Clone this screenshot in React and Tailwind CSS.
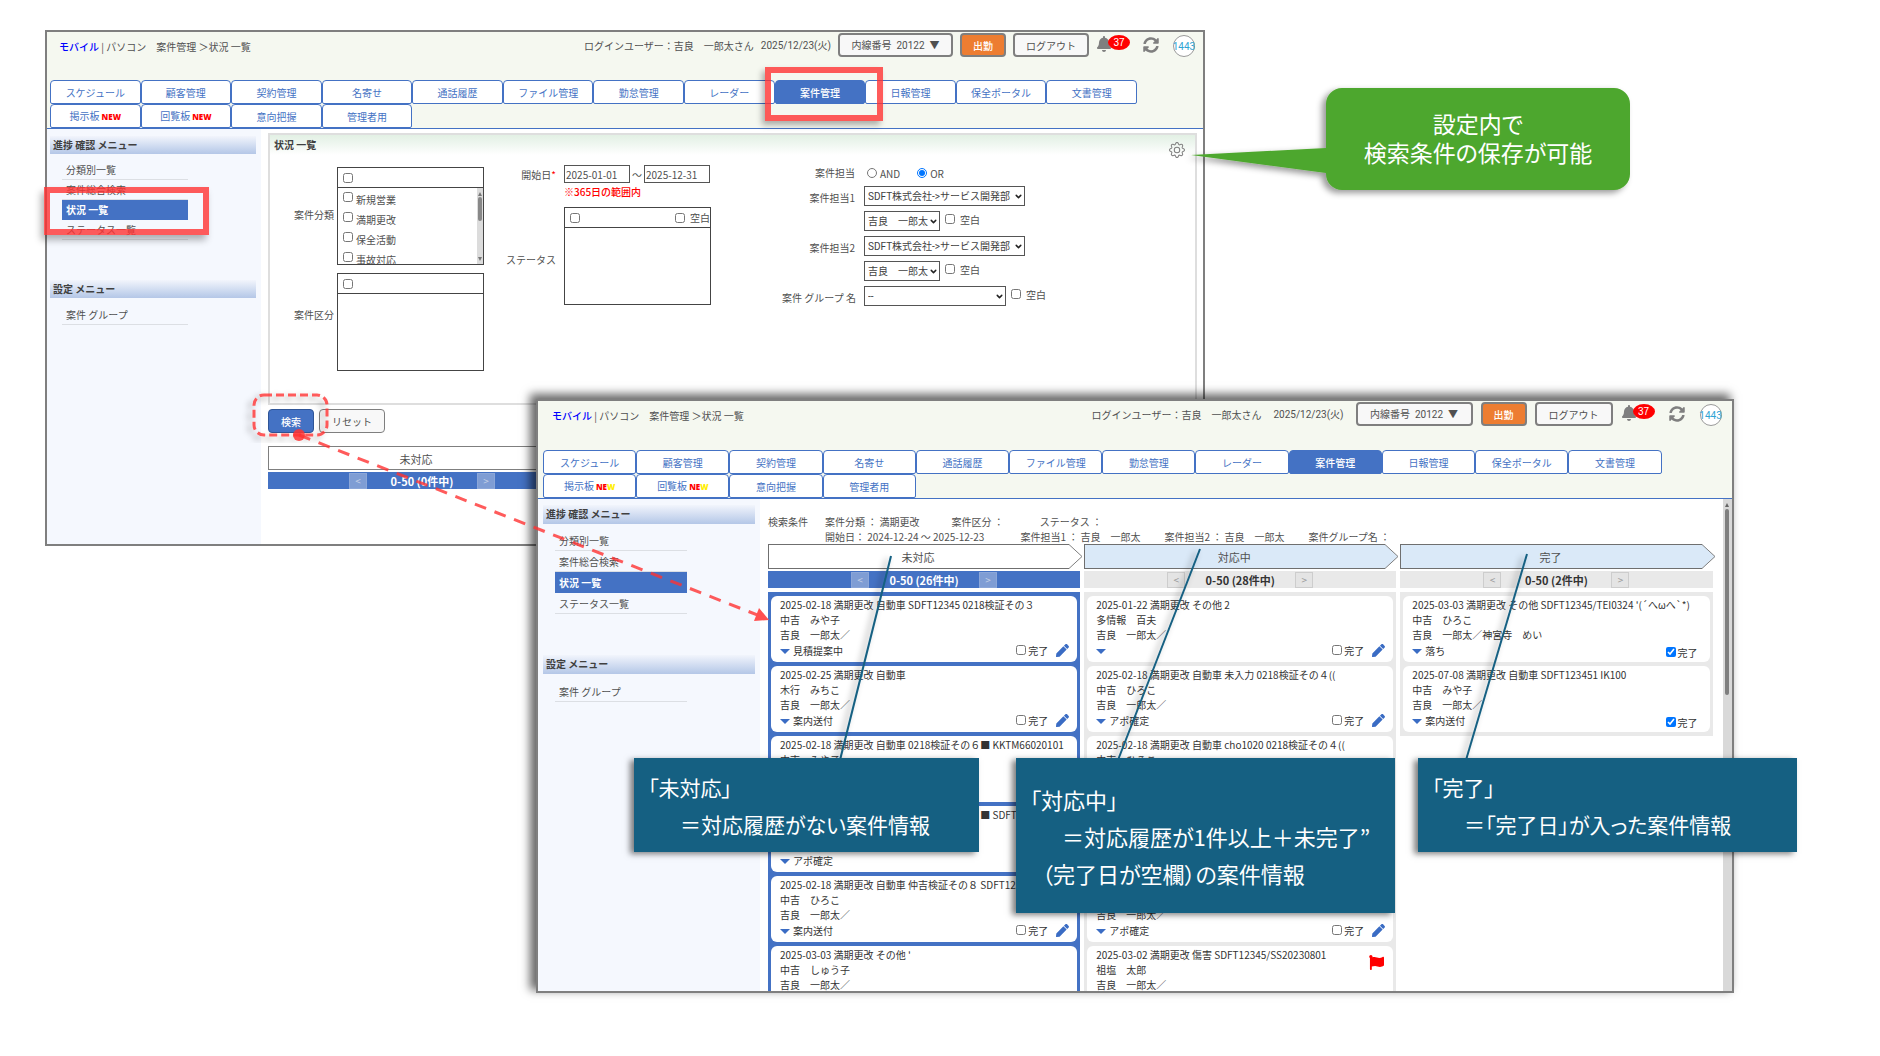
import React from 'react';
import { FaBell, FaPen, FaFlag, FaSyncAlt } from 'react-icons/fa';
import { BsGear } from 'react-icons/bs';
import { ChevronDown } from 'lucide-react';

const TABS = [
  'スケジュール', '顧客管理', '契約管理', '名寄せ', '通話履歴', 'ファイル管理', '勤怠管理', 'レーダー',
  '案件管理', '日報管理', '保全ポータル', '文書管理', '掲示板', '回覧板', '意向把握', '管理者用',
];

const HAS_NEW = ['掲示板', '回覧板'];

function TopBar({ large }) {
  return (
    <header className={'flex items-start bg-[#f5f8f0] ' + (large ? 'h-[49px] pr-[10px] pl-[14px]' : 'h-12 pr-2 pl-3')}>
      <nav className="flex h-7 items-center whitespace-pre">
        <a href="#mobile" className="font-medium text-[#0000ff]">モバイル</a>
        <span> | パソコン　案件管理 ＞状況 一覧</span>
      </nav>
      <div className={'ml-auto flex items-start pt-px ' + (large ? 'gap-[8px]' : 'gap-[7px]')}>
        <span className="leading-[26px] whitespace-pre">ログインユーザー：吉良　一郎太さん</span>
        <span className={"font-['Roboto','Noto_Sans_CJK_JP',sans-serif] leading-[26px] " + (large ? 'mx-1' : '')}>2025/12/23(火)</span>
        <button className={"h-6 rounded border-2 border-[#7f7f7f] bg-[#f8f8f8] font-['Roboto','Noto_Sans_CJK_JP',sans-serif] whitespace-pre " + (large ? 'w-[117px]' : 'w-[115px]')}>
          {'内線番号  20122  ▼'}
        </button>
        <button className="h-6 w-[46px] rounded border-2 border-[#7f7f7f] bg-[#ed7d31] font-medium text-white">出勤</button>
        <button className={'h-6 rounded border-2 border-[#7f7f7f] bg-[#f8f8f8] ' + (large ? 'w-[78px]' : 'w-[76px]')}>ログアウト</button>
        <div className="relative h-6 w-[34px]">
          <FaBell className="mt-[3px] size-[16px] text-[#7f7f7f]" />
          <span className="absolute top-[2px] left-[12px] flex h-[15px] w-[22px] items-center justify-center rounded-[50%] bg-[#ff0000] font-['Liberation_Sans',sans-serif] text-[10px] leading-none text-white">
            37
          </span>
        </div>
        <button aria-label="更新" className="ml-[6px] h-6">
          <FaSyncAlt className="size-[16px] text-[#7f7f7f]" />
        </button>
        <span className="mt-[2px] ml-[7px] flex size-[22px] items-center justify-center rounded-full border border-[#9a9a9a] bg-white font-['Roboto',sans-serif] text-[10px] text-[#2fa4d4]">
          1443
        </span>
      </div>
    </header>
  );
}

function NewMark({ twoTone }) {
  return (
    <b className="ml-[2px] font-['Open_Sans',sans-serif] text-[8px] font-extrabold text-[#ff0000]">
      {twoTone ? <>NE<span className="text-[#ffee00]">W</span></> : 'NEW'}
    </b>
  );
}

function TabBar({ twoTone }) {
  return (
    <nav className={'grid grid-cols-12 border-b border-[#4472c4] bg-[#f5f8f0] ' + (twoTone ? 'pr-[70px] pl-[5px]' : 'pr-[66px] pl-[3px]')}>
      {TABS.map((t) => (
        <button
          key={t}
          className={
            'h-6 rounded-t rounded-b-xs border border-[#4472c4] whitespace-nowrap ' +
            (t === '案件管理' ? 'bg-[#4472c4] font-medium text-white' : 'bg-white text-[#4472c4]')
          }
        >
          {t}
          {HAS_NEW.includes(t) && <NewMark twoTone={twoTone} />}
        </button>
      ))}
    </nav>
  );
}

function MenuHead({ children, large }) {
  return (
    <h2 className={'bg-linear-to-b from-[#f2f5fc] to-[#b4c7e7] pl-[3px] leading-[17px] font-bold text-[#404040] ' + (large ? 'h-[19px]' : 'h-[18px]')}>
      {children}
    </h2>
  );
}

function MenuItem({ children, active, large }) {
  return (
    <a
      href="#menu"
      className={
        'mr-[68px] ml-3 block border-b pl-1 ' +
        (large ? 'h-[21px] leading-[21px] ' : 'h-5 leading-[20px] ') +
        (active ? 'border-[#4472c4] bg-[#4472c4] font-bold text-white' : 'border-[#dcdfe4]')
      }
    >
      {children}
    </a>
  );
}

function SideMenu({ large }) {
  return (
    <aside className={'shrink-0 bg-[#f5f8fe] pr-[5px] ' + (large ? 'w-[222px] pt-[6px] pl-[5px]' : 'w-[214px] pt-[7px] pl-[3px]')}>
      <MenuHead large={large}>進捗 確認 メニュー</MenuHead>
      <div className={large ? 'mt-[6px] mb-[41px]' : 'mt-[6px] mb-10'}>
        <MenuItem large={large}>分類別一覧</MenuItem>
        <MenuItem large={large}>案件総合検索</MenuItem>
        <MenuItem large={large} active>状況 一覧</MenuItem>
        <MenuItem large={large}>ステータス一覧</MenuItem>
      </div>
      <MenuHead large={large}>設定 メニュー</MenuHead>
      <div className="mt-[7px]">
        <MenuItem large={large}>案件 グループ</MenuItem>
      </div>
    </aside>
  );
}

function Check({ label, className = '', defaultChecked }) {
  return (
    <label className={'flex items-center whitespace-nowrap ' + className}>
      <input type="checkbox" defaultChecked={defaultChecked} className="size-[10px]" />
      {label}
    </label>
  );
}

function SelectBox({ label, value, className }) {
  return (
    <span className={'relative inline-block ' + className}>
      <select
        aria-label={label}
        className="block h-5 w-full appearance-none border border-[#555] bg-white pl-[3px] font-['Roboto','Noto_Sans_CJK_JP',sans-serif] text-[#404040]"
      >
        <option>{value}</option>
      </select>
      <ChevronDown strokeWidth={4} className="pointer-events-none absolute top-[6px] right-[2px] size-[9px] text-[#222]" />
    </span>
  );
}

function ListBox({ items, blank, label }) {
  return (
    <div role="group" aria-label={label} className="w-[147px] border border-[#444] bg-white">
      <div className="flex h-5 items-center justify-between border-b border-[#444] pl-[5px]">
        <input type="checkbox" aria-label={label + ' すべて'} className="size-[10px]" />
        {blank && <Check label="空白" className="gap-[5px]" />}
      </div>
      <div className="flex h-[76px] overflow-hidden">
        <div className="flex-1">
          {items.map((i) => (
            <label key={i} className="flex h-5 items-start gap-[3px] pl-[5px] whitespace-nowrap">
              <input type="checkbox" className="mt-1 size-[10px]" />
              <span className="pt-[4px]">{i}</span>
            </label>
          ))}
        </div>
        {items.length > 0 && (
          <div className="flex w-[6px] flex-col items-center justify-between bg-[#dcdcdc]">
            <span className="border-x-2 border-t-0 border-b-4 border-transparent border-b-[#777] pt-1" />
            <span className="mb-auto mt-px h-6 w-1 rounded-full bg-[#888]" />
            <span className="mb-[3px] border-x-2 border-t-4 border-transparent border-t-[#777]" />
          </div>
        )}
      </div>
    </div>
  );
}

function FormRow({ label, children }) {
  return (
    <div className="mb-[5px] flex h-5 items-center">
      <span className="mr-[9px] w-[73px] pt-[3px] text-right whitespace-nowrap">{label}</span>
      {children}
    </div>
  );
}

function SearchPanel() {
  return (
    <section className="mt-1 mr-[6px] ml-[7px] border-2 border-[#dedede] bg-linear-to-b from-[#e2f0e4] to-white to-[20px] pb-8">
      <div className="flex h-7 items-start justify-between pl-1">
        <h1 className="leading-5 font-bold text-[#404040]">状況 一覧</h1>
        <button aria-label="設定" className="mt-[7px] mr-[10px]">
          <BsGear className="size-[16px] text-[#7f7f7f]" />
        </button>
      </div>
      <div className="flex items-start pt-[2px]">
        <div className="mt-[2px] flex flex-col gap-2">
          <div className="flex items-start">
            <span className="mr-[3px] w-[64px] pt-10 text-right">案件分類</span>
            <ListBox label="案件分類" items={['新規営業', '満期更改', '保全活動', '事故対応']} />
          </div>
          <div className="flex items-start">
            <span className="mr-[3px] w-[64px] pt-[34px] text-right">案件区分</span>
            <ListBox label="案件区分" items={[]} />
          </div>
        </div>
        <div className="ml-[22px]">
          <div className="flex h-[18px] items-center">
            <span className="mr-2 w-[50px] text-right">開始日<span className="text-[#ff0000]">*</span></span>
            <input aria-label="開始日 から" defaultValue="2025-01-01" className="h-[18px] w-[66px] border border-[#555] bg-white pl-px" />
            <span className="w-[14px] text-center">～</span>
            <input aria-label="開始日 まで" defaultValue="2025-12-31" className="h-[18px] w-[66px] border border-[#555] bg-white pl-px" />
          </div>
          <p className="mb-[6px] ml-[58px] h-[18px] leading-[18px] font-medium text-[#ff0000]">※365日の範囲内</p>
          <div className="flex items-center">
            <span className="mr-2 w-[50px] pt-[6px] text-right">ステータス</span>
            <ListBox label="ステータス" items={[]} blank />
          </div>
        </div>
        <div className="ml-[71px] -mt-[4px]">
          <FormRow label="案件担当">
            <label className="flex items-center gap-[3px] pt-1 pl-[3px]">
              <input type="radio" name="person-op" className="size-[10px]" />AND
            </label>
            <label className="ml-[17px] flex items-center gap-[3px] pt-1">
              <input type="radio" name="person-op" defaultChecked className="size-[10px]" />OR
            </label>
          </FormRow>
          <FormRow label="案件担当1">
            <SelectBox label="案件担当1 部署" value="SDFT株式会社->サービス開発部" className="w-[161px]" />
          </FormRow>
          <FormRow label="">
            <SelectBox label="案件担当1 氏名" value="吉良　一郎太" className="w-[76px]" />
            <Check label="空白" className="ml-[5px] gap-[5px] pb-1" />
          </FormRow>
          <FormRow label="案件担当2">
            <SelectBox label="案件担当2 部署" value="SDFT株式会社->サービス開発部" className="w-[161px]" />
          </FormRow>
          <FormRow label="">
            <SelectBox label="案件担当2 氏名" value="吉良　一郎太" className="w-[76px]" />
            <Check label="空白" className="ml-[5px] gap-[5px] pb-1" />
          </FormRow>
          <FormRow label="案件 グループ 名">
            <SelectBox label="案件 グループ 名" value="--" className="w-[142px]" />
            <Check label="空白" className="ml-[5px] gap-[5px] pb-1" />
          </FormRow>
        </div>
      </div>
    </section>
  );
}

function Pager({ text, blue }) {
  const btn = 'h-4 w-[18px] border leading-[13px] ' + (blue ? 'border-[#8ba6d8] bg-[#7f9dd4] text-[#c5d0e6]' : 'border-[#cdcdcd] bg-[#e4e4e4] text-[#999]');
  return (
    <div className={'flex h-[17px] items-center justify-center ' + (blue ? 'bg-[#4472c4] text-white' : 'bg-[#e9e9e9] text-[#333]')}>
      <button aria-label="前へ" className={btn}>&lt;</button>
      <span className="w-[110px] text-center text-[11px] leading-4 font-bold">{text}</span>
      <button aria-label="次へ" className={btn}>&gt;</button>
    </div>
  );
}

function SearchWindow() {
  return (
    <div className="absolute top-[30px] left-[45px] w-[61.7%] overflow-hidden border-2 border-[#7f7f7f] bg-white">
      <TopBar />
      <TabBar />
      <div className="flex">
        <SideMenu />
        <main className="min-w-0 flex-1">
          <SearchPanel />
          <div className="mt-1 ml-[7px] flex gap-[5px]">
            <button className="h-6 w-[46px] rounded border border-[#2f5597] bg-[#4472c4] font-medium text-white">検索</button>
            <button className="h-6 w-[66px] rounded border border-[#7f7f7f] bg-[#f8f8f8]">リセット</button>
          </div>
          <div className="mt-[13px] ml-[7px] w-[308px] pb-[55px]">
            <div className="mb-[2px] h-6 border border-[#7f7f7f] pr-3 text-center text-[11px] leading-6">未対応</div>
            <Pager blue text="0-50 (0件中)" />
          </div>
        </main>
      </div>
    </div>
  );
}

const COLUMNS = [
  {
    name: '未対応', count: '0-50 (26件中)', blue: true,
    cards: [
      { t: '2025-02-18 満期更改 自動車 SDFT12345 0218検証その３', a: '中吉　みや子', b: '吉良　一郎太／', s: '見積提案中' },
      { t: '2025-02-25 満期更改 自動車', a: '木行　みちこ', b: '吉良　一郎太／', s: '案内送付' },
      { t: '2025-02-18 満期更改 自動車 0218検証その６■ KKTM66020101', a: '中吉　みや子', b: '吉良　一郎太／', s: '案内送付' },
      { t: '2025-02-18 満期更改 自動車 0218検証その６■ SDFT12345', a: '中吉　みや子', b: '吉良　一郎太／', s: 'アポ確定' },
      { t: '2025-02-18 満期更改 自動車 仲吉検証その８ SDFT12345', a: '中吉　ひろこ', b: '吉良　一郎太／', s: '案内送付' },
      { t: "2025-03-03 満期更改 その他 '", a: '中吉　しゅう子', b: '吉良　一郎太／', cut: true },
    ],
  },
  {
    name: '対応中', count: '0-50 (28件中)',
    cards: [
      { t: '2025-01-22 満期更改 その他 2', a: '多情報　百夫', b: '吉良　一郎太／', s: '' },
      { t: '2025-02-18 満期更改 自動車 未入力 0218検証その４((', a: '中吉　ひろこ', b: '吉良　一郎太／', s: 'アポ確定' },
      { t: '2025-02-18 満期更改 自動車 cho1020 0218検証その４((', a: '中吉　ひろこ', b: '吉良　一郎太／', s: 'アポ確定' },
      { t: '2025-02-18 満期更改 自動車', a: '中吉　ひろこ', b: '吉良　一郎太／', s: 'アポ確定' },
      { t: '2025-02-18 満期更改 自動車', a: '中吉　ひろこ', b: '吉良　一郎太／', s: 'アポ確定' },
      { t: '2025-03-02 満期更改 傷害 SDFT12345/SS20230801', a: '祖塩　太郎', b: '吉良　一郎太／', cut: true, flag: true },
    ],
  },
  {
    name: '完了', count: '0-50 (2件中)',
    cards: [
      { t: "2025-03-03 満期更改 その他 SDFT12345/TEI0324 '(´へωへ`*)", a: '中吉　ひろこ', b: '吉良　一郎太／神宮寺　めい', s: '落ち', done: true },
      { t: '2025-07-08 満期更改 自動車 SDFT123451 IK100', a: '中吉　みや子', b: '吉良　一郎太／', s: '案内送付', done: true },
    ],
  },
];

function Card({ c }) {
  return (
    <article className="relative h-[66px] overflow-hidden rounded-md bg-white pt-px pr-2 pl-[9px] leading-[15px] whitespace-nowrap text-[#333]">
      <p>{c.t}</p>
      <p>{c.a}</p>
      <p>{c.b}</p>
      {!c.cut && (
        <div className="flex h-4 items-center">
          <span className="mt-[2px] mr-[3px] border-x-5 border-t-[5px] border-transparent border-t-[#3a6cc4]" />
          <span>{c.s}</span>
          <Check label="完了" defaultChecked={c.done} className={'ml-auto gap-[2px] ' + (c.done ? 'mr-1 pt-1' : '')} />
          {!c.done && (
            <button aria-label="編集" className="ml-2"><FaPen className="size-[13px] text-[#3a6cc4]" /></button>
          )}
        </div>
      )}
      {c.flag && <FaFlag className="absolute top-[9px] right-[9px] size-[15px] text-[#ff0000]" />}
    </article>
  );
}

function StageArrow({ name, fill, body }) {
  return (
    <div className="-mr-[3px] flex h-[25px]">
      <div className={'flex-1 border border-r-0 border-[#6f6f6f] pr-[2px] text-center text-[11px] leading-6 ' + body}>{name}</div>
      <svg width="14" height="25" viewBox="0 0 14 25" fill={fill} stroke="#7f7f7f">
        <path d="M0 .5 L13 12.5 L0 24.5" />
      </svg>
    </div>
  );
}

function BoardWindow() {
  return (
    <div className="absolute top-[399px] left-[536px] flex h-[594px] w-[63.7%] flex-col overflow-hidden border-2 border-[#7f7f7f] bg-white shadow-[-5px_-4px_9px_1px_rgba(0,0,0,0.6)]">
      <TopBar large />
      <TabBar twoTone />
      <div className="flex min-h-0 flex-1">
        <SideMenu large />
        <main className="min-w-0 flex-1 overflow-hidden pr-[10px] pl-2">
          <div className="flex h-[45px] pt-[15px] leading-[15px] whitespace-pre">
            <span className="w-[57px]">検索条件</span>
            <div>
              <p>
                <span>案件分類 ： 満期更改</span>
                <span className="ml-8">案件区分 ：</span>
                <span className="ml-9">ステータス ：</span>
              </p>
              <p>
                <span>開始日： 2024-12-24 ～ 2025-12-23</span>
                <span className="ml-9">案件担当1 ： 吉良　一郎太</span>
                <span className="ml-6">案件担当2 ： 吉良　一郎太</span>
                <span className="ml-6">案件グループ名 ：</span>
              </p>
            </div>
          </div>
          <div className="grid grid-cols-3 items-start gap-x-1">
            {COLUMNS.map((col) => (
              <section key={col.name}>
                <StageArrow name={col.name} fill={col.blue ? '#fff' : '#dae9f8'} body={col.blue ? 'bg-white' : 'bg-[#dae9f8]'} />
                <div className="mt-[2px] mb-1"><Pager text={col.count} blue={col.blue} /></div>
                <div className={'flex flex-col gap-1 px-[3px] py-1 ' + (col.blue ? 'bg-[#4472c4]' : 'bg-[#e9e9e9]')}>
                  {col.cards.map((c, i) => <Card key={i} c={c} />)}
                </div>
              </section>
            ))}
          </div>
        </main>
        <div className="flex w-[9px] flex-col items-center bg-[#d9d9d9] pt-1">
          <span className="border-x-2 border-b-4 border-transparent border-b-[#666]" />
          <span className="mt-[2px] h-[186px] w-1 rounded-full bg-[#7f7f7f]" />
        </div>
      </div>
    </div>
  );
}

const NOTE = "absolute flex flex-col justify-center bg-[#156082] pt-[2px] pl-[14px] leading-[37px] whitespace-pre text-white [font-feature-settings:'palt'] shadow-[-4px_2px_6px_rgba(0,0,0,0.5)]";

export default function App() {
  return (
    <div className="relative min-h-screen w-full overflow-hidden bg-white font-['Noto_Sans_CJK_JP','Noto_Sans',sans-serif] text-[10px] leading-[15px] text-[#505050]">
      <SearchWindow />
      <BoardWindow />

      <div className="absolute top-[187px] left-[44px] h-[48px] w-[165px] border-[6px] border-[#ff3232]/80 shadow-[-3px_5px_7px_rgba(0,0,0,0.3)]" />
      <div className="absolute top-[67px] left-[765px] h-[54px] w-[118px] border-[6px] border-[#ff3232]/80 shadow-[-3px_4px_6px_rgba(0,0,0,0.3)]" />

      <svg className="pointer-events-none absolute top-0 left-0 h-[1056px] w-[1880px]" viewBox="0 0 1880 1056" fill="none">
        <defs>
          <filter id="soft" x="-20%" y="-20%" width="140%" height="140%">
            <feDropShadow dx="-4" dy="3" stdDeviation="3" floodOpacity="0.4" />
          </filter>
        </defs>
        <rect x="254" y="395" width="73" height="40" rx="10" stroke="#ff3232" strokeOpacity="0.8" strokeWidth="3" strokeDasharray="8 4" filter="url(#soft)" />
        <circle cx="299" cy="435" r="6" fill="#ff3232" fillOpacity="0.85" />
        <path d="M299 435 L760 616" stroke="#ff3232" strokeOpacity="0.8" strokeWidth="3" strokeDasharray="12 9" />
        <path d="M769 620 L754 621 L759 608 Z" fill="#ff5050" />
        <g stroke="#156082" strokeWidth="2" filter="url(#soft)">
          <path d="M891 556 L840 760" />
          <path d="M1200 549 L1118 760" />
          <path d="M1527 554 L1466 760" />
        </g>
        <path
          d="M1342 88 H1614 A16 16 0 0 1 1630 104 V174 A16 16 0 0 1 1614 190 H1342 A16 16 0 0 1 1326 174 V173 L1191 155 L1326 148 V104 A16 16 0 0 1 1342 88 Z"
          fill="#4ea72e"
          filter="url(#soft)"
        />
      </svg>

      <div className={NOTE + ' top-[758px] left-[634px] h-[94px] w-[345px] text-[21px]'}>
        <p>「未対応」</p>
        <p className="pl-8">＝対応履歴がない案件情報</p>
      </div>
      <div className={NOTE + ' top-[758px] left-[1016px] h-[155px] w-[379px] text-[22px]'}>
        <p>「対応中」</p>
        <p className="pl-8">＝対応履歴が1件以上＋未完了”</p>
        <p className="pl-3">（完了日が空欄）の案件情報</p>
      </div>
      <div className={NOTE + ' top-[758px] left-[1418px] h-[94px] w-[379px] text-[21px]'}>
        <p>「完了」</p>
        <p className="pl-8">＝「完了日」が入った案件情報</p>
      </div>

      <div className="absolute top-[88px] left-[1326px] flex h-[102px] w-[304px] flex-col items-center justify-center pb-[2px] text-[23px] leading-[29px] text-white [font-feature-settings:'palt']">
        <p>設定内で</p>
        <p>検索条件の保存が可能</p>
      </div>
    </div>
  );
}
